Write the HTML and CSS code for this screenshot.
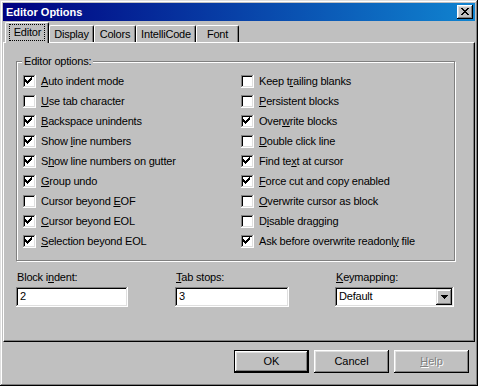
FILE: index.html
```html
<!DOCTYPE html>
<html lang="en">
<head>
  <meta charset="UTF-8" />
  <title>Editor Options</title>
  <link rel="stylesheet" href="styles.css">
</head>
<body>
  <svg class="defs" width="0" height="0">
    <symbol id="chk" viewBox="0 0 9 9">
      <path d="M6 0h1v1h-1z M5 1h2v1h-2z M0 2h1v1h-1z M4 2h3v1h-3z M0 3h2v1h-2z M3 3h3v1h-3z M0 4h5v1h-5z M1 5h3v1h-3z M2 6h1v1h-1z" fill="#000"/>
    </symbol>
  </svg>

  <div class="window">
    <div class="titlebar">
      <span class="title">Editor Options</span>
      <button class="close-btn" aria-label="Close">
        <svg width="8" height="7" viewBox="0 0 8 7" shape-rendering="crispEdges">
          <path d="M0 0h2v1h-2z M6 0h2v1h-2z M1 1h2v1h-2z M5 1h2v1h-2z M2 2h4v1h-4z M3 3h2v1h-2z M2 4h4v1h-4z M1 5h2v1h-2z M5 5h2v1h-2z M0 6h2v1h-2z M6 6h2v1h-2z" fill="#000"/>
        </svg>
      </button>
    </div>

    <div class="tabs">
      <div class="tab active tab-editor"><span class="focus">Editor</span></div>
      <div class="tab tab-display">Display</div>
      <div class="tab tab-colors">Colors</div>
      <div class="tab tab-intelli">IntelliCode</div>
      <div class="tab tab-font">Font</div>
    </div>

    <div class="panel">
      <div class="group">
        <span class="legend">Editor options:</span>
        <div class="opts">
          <div class="opt"><span class="check"><svg><use href="#chk"/></svg></span><span><u>A</u>uto indent mode</span></div>
          <div class="opt"><span class="check"></span><span><u>U</u>se tab character</span></div>
          <div class="opt"><span class="check"><svg><use href="#chk"/></svg></span><span><u>B</u>ackspace unindents</span></div>
          <div class="opt"><span class="check"><svg><use href="#chk"/></svg></span><span>Show <u>l</u>ine numbers</span></div>
          <div class="opt"><span class="check"><svg><use href="#chk"/></svg></span><span>S<u>h</u>ow line numbers on gutter</span></div>
          <div class="opt"><span class="check"><svg><use href="#chk"/></svg></span><span><u>G</u>roup undo</span></div>
          <div class="opt"><span class="check"></span><span>Cursor beyond <u>E</u>OF</span></div>
          <div class="opt"><span class="check"><svg><use href="#chk"/></svg></span><span><u>C</u>ursor beyond EOL</span></div>
          <div class="opt"><span class="check"><svg><use href="#chk"/></svg></span><span><u>S</u>election beyond EOL</span></div>

          <div class="opt"><span class="check"></span><span>Keep t<u>r</u>ailing blanks</span></div>
          <div class="opt"><span class="check"></span><span><u>P</u>ersistent blocks</span></div>
          <div class="opt"><span class="check"><svg><use href="#chk"/></svg></span><span>Over<u>w</u>rite blocks</span></div>
          <div class="opt"><span class="check"></span><span><u>D</u>ouble click line</span></div>
          <div class="opt"><span class="check"><svg><use href="#chk"/></svg></span><span>Find te<u>x</u>t at cursor</span></div>
          <div class="opt"><span class="check"><svg><use href="#chk"/></svg></span><span><u>F</u>orce cut and copy enabled</span></div>
          <div class="opt"><span class="check"></span><span><u>O</u>verwrite cursor as block</span></div>
          <div class="opt"><span class="check"></span><span>D<u>i</u>sable dragging</span></div>
          <div class="opt"><span class="check"><svg><use href="#chk"/></svg></span><span>Ask before overwrite readonl<u>y</u> file</span></div>
        </div>
      </div>

      <div class="fields">
        <div class="field field-block">
          <div class="field-label">Block i<u>n</u>dent:</div>
          <div class="edit edit-block">2</div>
        </div>
        <div class="field field-tabs">
          <div class="field-label"><u>T</u>ab stops:</div>
          <div class="edit edit-tabs">3</div>
        </div>
        <div class="field">
          <div class="field-label"><u>K</u>eymapping:</div>
          <div class="combo">
            <span class="combo-text">Default</span>
            <span class="combo-btn">
              <svg width="7" height="4" viewBox="0 0 7 4" shape-rendering="crispEdges">
                <path d="M0 0h7v1h-7z M1 1h5v1h-5z M2 2h3v1h-3z M3 3h1v1h-1z" fill="#000"/>
              </svg>
            </span>
          </div>
        </div>
      </div>
    </div>

    <div class="buttons">
      <button class="btn btn-default">OK</button>
      <button class="btn">Cancel</button>
      <button class="btn" disabled><u>H</u>elp</button>
    </div>
  </div>
</body>
</html>
```

FILE: styles.css
```css
* { box-sizing: border-box; }
body {
  margin: 0;
  font-family: 'Liberation Sans', Arial, sans-serif;
  font-size: 11px;
  line-height: 13px;
  letter-spacing: -0.2px;
  color: #000;
  background: #c0c0c0;
}
.defs { position: absolute; }
u { text-decoration: underline; text-underline-offset: 1px; }

.window {
  width: 478px;
  height: 386px;
  padding: 3px;
  background: #c0c0c0;
  box-shadow: inset -1px -1px #000, inset 1px 1px #dfdfdf,
              inset -2px -2px #808080, inset 2px 2px #fff;
  display: flex;
  flex-direction: column;
}

/* title bar */
.titlebar {
  height: 18px;
  display: flex;
  align-items: center;
  justify-content: space-between;
  padding: 0 2px 0 3px;
  background: linear-gradient(to right, #000080, #1084d0);
}
.title {
  color: #fff;
  font-weight: 700;
  letter-spacing: 0;
}
.close-btn {
  width: 16px;
  height: 14px;
  padding: 0;
  border: none;
  background: #c0c0c0;
  box-shadow: inset -1px -1px #000, inset 1px 1px #fff,
              inset -2px -2px #808080, inset 2px 2px #dfdfdf;
  display: flex;
  align-items: center;
  justify-content: center;
}
.close-btn svg { margin: 0 1px 1px 0; }

/* tabs */
.tabs {
  margin-top: 1px;
  height: 20px;
  display: flex;
  align-items: flex-end;
  padding-left: 2px;
}
.tab {
  height: 17px;
  padding-top: 2px;
  text-align: center;
  border-top: 1px solid #fff;
  border-left: 1px solid #fff;
  border-right: 1px solid #000;
  border-top-left-radius: 2px;
  border-top-right-radius: 2px;
  box-shadow: inset -1px 0 #808080;
  background: #c0c0c0;
}
.tab.active {
  height: 21px;
  padding-top: 2px;
  margin-bottom: -1px;
  position: relative;
  z-index: 1;
}
.tab-editor { width: 44px; }
.tab-display { width: 45px; }
.tab-colors { width: 42px; }
.tab-intelli { width: 60px; }
.tab-font { width: 43px; }
.focus {
  display: inline-block;
  padding: 1px 3px 1px 4px;
  outline: 1px dotted #000;
  outline-offset: 0;
}

/* page panel */
.panel {
  height: 300px;
  border: 1px solid;
  border-color: #fff #000 #000 #fff;
  box-shadow: inset -1px -1px #808080;
  padding: 18px 0 0 12px;
}
.group {
  position: relative;
  width: 439px;
  height: 200px;
  border: 1px solid #808080;
  box-shadow: 1px 1px 0 #fff, inset 1px 1px 0 #fff;
  padding: 9px 0 0 6px;
}
.legend {
  position: absolute;
  top: -7px;
  left: 5px;
  padding: 0 2px;
  background: #c0c0c0;
}
.opts {
  display: grid;
  grid-template-columns: 218px 1fr;
  grid-template-rows: repeat(9, 20px);
  grid-auto-flow: column;
}
.opt {
  display: flex;
  align-items: center;
  gap: 5px;
  white-space: nowrap;
}
.check {
  width: 13px;
  height: 13px;
  flex: none;
  background: #fff;
  box-shadow: inset -1px -1px #fff, inset 1px 1px #808080,
              inset -2px -2px #dfdfdf, inset 2px 2px #000;
  padding: 2px;
}
.check svg { display: block; width: 9px; height: 9px; shape-rendering: crispEdges; }

/* edits */
.fields {
  display: flex;
  margin-top: 10px;
}
.field-block { width: 159px; }
.field-tabs { width: 160px; }
.field-label { margin-bottom: 3px; padding-left: 1px; }
.edit, .combo {
  height: 20px;
  background: #fff;
  box-shadow: inset -1px -1px #fff, inset 1px 1px #808080,
              inset -2px -2px #dfdfdf, inset 2px 2px #000;
  padding: 3px 4px;
}
.edit-block { width: 112px; }
.edit-tabs { width: 114px; }
.combo {
  width: 119px;
  display: flex;
  justify-content: space-between;
  padding: 2px;
}
.combo-text { padding: 1px 2px; }
.combo-btn {
  width: 16px;
  height: 16px;
  background: #c0c0c0;
  box-shadow: inset -1px -1px #000, inset 1px 1px #dfdfdf,
              inset -2px -2px #808080, inset 2px 2px #fff;
  display: flex;
  align-items: center;
  justify-content: center;
}

/* dialog buttons */
.buttons {
  margin-top: 8px;
  display: flex;
  justify-content: flex-end;
  gap: 5px;
  padding-right: 6px;
}
.btn {
  width: 75px;
  height: 23px;
  padding: 0;
  font: inherit;
  color: #000;
  border: none;
  background: #c0c0c0;
  box-shadow: inset -1px -1px #000, inset 1px 1px #fff,
              inset -2px -2px #808080, inset 2px 2px #dfdfdf;
}
.btn-default {
  box-shadow: inset 0 0 0 1px #000, inset -2px -2px #000, inset 2px 2px #fff,
              inset -3px -3px #808080, inset 3px 3px #dfdfdf;
}
.btn:disabled {
  color: #808080;
  text-shadow: 1px 1px 0 #fff;
}
```
